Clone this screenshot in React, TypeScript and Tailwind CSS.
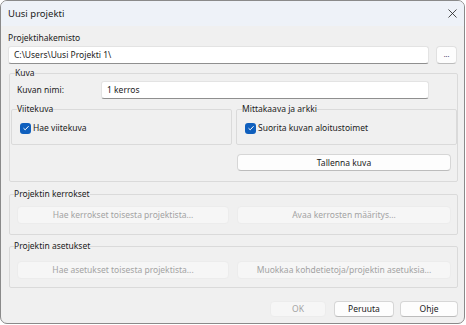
import { X } from "lucide-react";

const btn =
  "flex items-center justify-center rounded-[4px] border border-[#d6d6d6] border-b-[#bcbcbc] bg-[#fdfdfd] text-[#1b1b1b]";
const btnOff =
  "flex items-center justify-center rounded-[4px] border border-[#ececec] bg-[#f6f6f6] text-[#a3a3a3]";
const input =
  "flex items-center rounded-[3px] border border-[#e3e3e3] border-b-[#8f8f8f] bg-white px-[5px]";
const group = "border border-[#dadada] rounded-[2px] min-w-0";

const Check = ({ label }: { label: string }) => (
  <div className="flex items-center h-[14px] gap-[2px]">
    <span className="w-[11px] h-[11px] rounded-[3px] bg-[#0f5fbd] flex items-center justify-center">
      <svg width="8" height="8" viewBox="0 0 8 8">
        <path d="M1.5 4.2 L3.2 5.8 L6.6 2.2" fill="none" stroke="white" strokeWidth="1" />
      </svg>
    </span>
    <span>{label}</span>
  </div>
);

export default function App() {
  return (
    <div
      className="w-[466px] h-[325px] bg-white"
      style={{ fontFamily: '"Noto Sans", "Open Sans", sans-serif' }}
    >
      <div className="w-[465px] h-[324px] border border-[#8a8a8a] rounded-[7px] bg-[#f0f0f0] overflow-hidden flex flex-col text-[8.5px] leading-[14px] text-[#1b1b1b]">
        <div className="h-[25px] shrink-0 bg-[#eef2f8] flex items-center justify-between pl-[7px] pr-[4px]">
          <span className="text-[9.5px]">Uusi projekti</span>
          <X size={15} strokeWidth={1.3} className="text-[#222]" />
        </div>

        <div className="px-[7px] flex flex-col">
          <div className="mt-[5px]">Projektihakemisto</div>
          <div className="mt-[1px] flex gap-[7px]">
            <div className={`${input} w-[421px] h-[18px]`}>C:\Users\Uusi Projekti 1\</div>
            <div className={`${btn} w-[21px] h-[18px] text-[7px] text-[#4a3f6b] border-[#e0e0e0]`}>...</div>
          </div>

          <fieldset className={`${group} mt-[2px] ml-[1px] w-[449px] px-0 pb-[10px]`}>
            <legend className="ml-[5px] px-0">Kuva</legend>
            <div className="mt-[1px] flex items-center pl-[7px]">
              <span className="w-[84px]">Kuvan nimi:</span>
              <div className={`${input} w-[328px] h-[18px]`}>1 kerros</div>
            </div>
            <div className="mt-[3px] ml-[1px] flex gap-[4px]">
              <div className="w-[221px] flex flex-col">
                <fieldset className={`${group} pl-[8px] pb-[9px]`}>
                  <legend className="-ml-[3px] px-0">Viitekuva</legend>
                  <div className="mt-[5px]">
                    <Check label="Hae viitekuva" />
                  </div>
                </fieldset>
              </div>
              <div className="w-[221px] flex flex-col">
                <fieldset className={`${group} pl-[8px] pb-[9px]`}>
                  <legend className="-ml-[3px] px-0">Mittakaava ja arkki</legend>
                  <div className="mt-[5px]">
                    <Check label="Suorita kuvan aloitustoimet" />
                  </div>
                </fieldset>
                <div className={`${btn} mt-[9px] ml-[1px] w-[214px] h-[17px]`}>Tallenna kuva</div>
              </div>
            </div>
          </fieldset>

          <fieldset className={`${group} mt-[5px] ml-[1px] w-[449px] pl-[7px] pb-[10px]`}>
            <legend className="-ml-[3px] px-0">Projektin kerrokset</legend>
            <div className="mt-[5px] flex gap-[8px]">
              <div className={`${btnOff} w-[212px] h-[18px]`}>Hae kerrokset toisesta projektista...</div>
              <div className={`${btnOff} w-[214px] h-[18px]`}>Avaa kerrosten määritys...</div>
            </div>
          </fieldset>

          <fieldset className={`${group} mt-[4px] ml-[1px] w-[449px] pl-[7px] pb-[8px]`}>
            <legend className="-ml-[3px] px-0">Projektin asetukset</legend>
            <div className="mt-[8px] flex gap-[8px]">
              <div className={`${btnOff} w-[212px] h-[18px]`}>Hae asetukset toisesta projektista...</div>
              <div className={`${btnOff} w-[214px] h-[18px]`}>Muokkaa kohdetietoja/projektin asetuksia...</div>
            </div>
          </fieldset>

          <div className="mt-[13px] flex justify-end -mr-[1px]">
            <div className={`${btnOff} w-[56px] h-[16px]`}>OK</div>
            <div className={`${btn} ml-[8px] w-[60px] h-[16px]`}>Peruuta</div>
            <div className={`${btn} ml-[6px] w-[58px] h-[16px]`}>Ohje</div>
          </div>
        </div>
      </div>
    </div>
  );
}
